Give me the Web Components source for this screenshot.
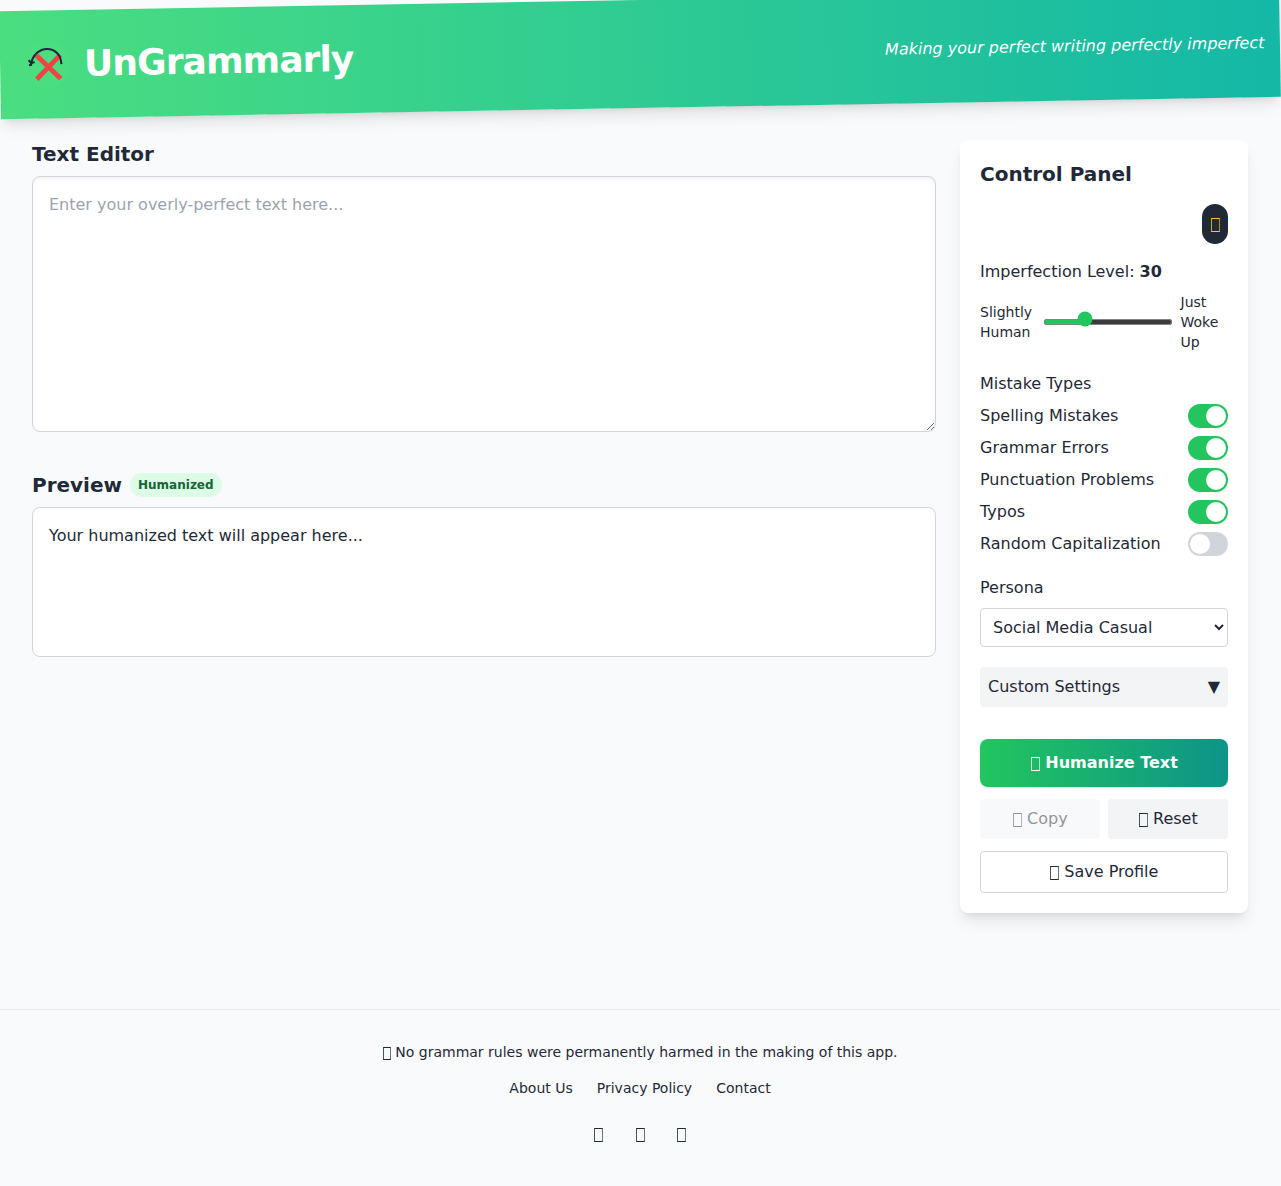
<!DOCTYPE html>
<html lang="en">
<head>
<meta charset="UTF-8">
<title>UnGrammarly</title>
<style>
  body {
    margin: 0;
    overflow-x: hidden;
    background: #f9fafb;
    color: #1f2937;
    font-family: "DejaVu Sans", sans-serif;
    font-size: 16px;
    line-height: 1.5;
  }
</style>
</head>
<body>
<ungrammarly-app></ungrammarly-app>

<script>
// shared by every component, each shadow root needs its own copy
const RESET = `
  *, ::before, ::after { box-sizing: border-box; }
  h1, h2, p { margin: 0; }
  button, select, textarea, input { font: inherit; color: inherit; margin: 0; }
  button { border: 0; background: none; }
`;

function define(name, html) {
  customElements.define(name, class extends HTMLElement {
    constructor() {
      super();
      this.attachShadow({ mode: "open" });
      this.shadowRoot.innerHTML = `<style>${RESET}</style>${html}`;
    }
  });
}

define("ug-logo", `
  <style>
    :host { display: block; width: 60px; height: 60px; }
    svg { display: block; }
  </style>
  <svg width="60" height="60" viewBox="0 0 100 100" fill="none">
    <circle cx="50" cy="50" r="40" fill="#4ade80" />
    <path d="M34 34.5 L74 74.5 M74 34.5 L34 74.5" stroke="#ef4444" stroke-width="8" />
    <path d="M25 50 C30 16 75 16 75.5 50" stroke="#1f2937" stroke-width="3.5" />
    <path d="M21 42.5 L25 47 L31 46 M21.5 51 L26.5 50" stroke="#1f2937" stroke-width="3.5" />
  </svg>
`);

// outlined box, one glyph wide
define("ug-glyph", `
  <style>
    :host { display: inline-block; width: 0.6em; height: 0.875em; padding-left: 0.6px; box-sizing: border-box; vertical-align: -0.19em; }
    i { display: block; height: 100%; border: 1px solid currentColor; border-left-color: color-mix(in srgb, currentColor 80%, transparent); border-right-color: color-mix(in srgb, currentColor 65%, transparent); }
  </style>
  <i></i>
`);

define("ug-header", `
  <style>
    :host {
      display: flex;
      align-items: center;
      justify-content: space-between;
      height: 108px;
      box-sizing: border-box;
      padding: 24px 15.5px 24px 16px;
      background: linear-gradient(to right, #4ade80, #14b8a6);
      box-shadow: 0 10px 15px -3px rgba(0,0,0,0.1), 0 4px 6px -4px rgba(0,0,0,0.1);
      color: #fff;
      transform: rotate(-1deg);
    }
    .brand { display: flex; align-items: center; gap: 8px; }
    h1 { font-size: 36px; line-height: 40px; letter-spacing: -0.9px; font-weight: 700; }
    p { font-style: italic; }
  </style>
  <div class="brand">
    <ug-logo></ug-logo>
    <h1>UnGrammarly</h1>
  </div>
  <p><slot></slot></p>
`);

define("ug-editor", `
  <style>
    :host { display: block; }
    h2 { font-size: 20px; line-height: 28px; margin-bottom: 8px; }
    textarea {
      display: block;
      width: 100%;
      height: 256px;
      padding: 16px;
      border: 1px solid #d1d5db;
      border-radius: 8px;
      background: #fff;
      box-shadow: inset 0 2px 4px 0 rgba(0,0,0,0.05);
      resize: vertical;
    }
    textarea::placeholder { color: #9ca3af; }
  </style>
  <h2>Text Editor</h2>
  <textarea placeholder="Enter your overly-perfect text here..."></textarea>
`);

define("ug-preview", `
  <style>
    :host { display: block; }
    .head { display: flex; align-items: center; gap: 8px; margin-bottom: 8px; }
    h2 { font-size: 20px; line-height: 28px; }
    .badge {
      padding: 4px 8px;
      border-radius: 999px;
      background: #dcfce7;
      color: #166534;
      font-size: 12px;
      line-height: 16px;
      font-weight: 600;
    }
    .output {
      min-height: 150px;
      padding: 16px;
      border: 1px solid #d1d5db;
      border-radius: 8px;
      background: #fff;
    }
  </style>
  <div class="head"><h2>Preview</h2><span class="badge">Humanized</span></div>
  <div class="output"><slot></slot></div>
`);

define("ug-level", `
  <style>
    :host { display: block; }
    .row { display: flex; align-items: center; gap: 8px; margin-top: 8px; font-size: 14px; line-height: 20px; }
    .low { width: 55px; flex: none; }
    .high { width: 47.5px; flex: none; }
    input { flex: 1; min-width: 0; height: 6px; accent-color: #22c55e; }
    input::-webkit-slider-thumb {
      -webkit-appearance: none;
      width: 15px;
      height: 15px;
      border-radius: 50%;
      background: #22c55e;
      margin-top: -6px;
    }
  </style>
  <div>Imperfection Level: <b>30</b></div>
  <div class="row">
    <span class="low">Slightly Human</span>
    <input type="range" min="0" max="100" value="30">
    <span class="high">Just Woke Up</span>
  </div>
`);

define("ug-toggle", `
  <style>
    :host { display: flex; align-items: center; justify-content: space-between; height: 24px; }
    .track { width: 40px; height: 24px; padding: 2px; border-radius: 12px; background: #d1d5db; display: flex; }
    .track::before { content: ""; width: 20px; height: 20px; border-radius: 50%; background: #fff; }
    :host([checked]) .track { background: #22c55e; justify-content: flex-end; }
  </style>
  <span><slot></slot></span>
  <span class="track"></span>
`);

define("ug-button", `
  <style>
    :host { display: block; }
    button { display: block; width: 100%; padding: 8px; border-radius: 4px; background: #f3f4f6; text-align: center; }
    :host([kind="primary"]) button {
      padding: 12px;
      border-radius: 8px;
      background: linear-gradient(to right, #22c55e, #0d9488);
      box-shadow: 0 1px 3px 0 rgba(0,0,0,0.1), 0 1px 2px -1px rgba(0,0,0,0.1);
      color: #fff;
      font-weight: 700;
    }
    :host([kind="outline"]) button { background: #fff; border: 1px solid #d1d5db; }
    :host([disabled]) button { opacity: 0.5; }
  </style>
  <button><slot></slot></button>
`);

define("ug-panel", `
  <style>
    :host {
      display: block;
      padding: 20px;
      border-radius: 8px;
      background: #fff;
      box-shadow: 0 10px 15px -3px rgba(0,0,0,0.1), 0 4px 6px -4px rgba(0,0,0,0.1);
    }
    h2 { font-size: 20px; line-height: 28px; margin-bottom: 16px; }
    .theme { display: flex; justify-content: flex-end; margin-bottom: 16px; }
    .theme button { height: 40px; padding: 8px; border-radius: 999px; background: #1f2937; color: #facc15; line-height: 24px; }
    ug-level { margin-bottom: 20px; }
    .types { display: grid; gap: 8px; margin-bottom: 20px; }
    label { display: block; margin-bottom: 8px; }
    select {
      display: block;
      width: 100%;
      height: 39px;
      padding: 8px;
      border: 1px solid #d1d5db;
      border-radius: 4px;
      background: #fff;
      margin-bottom: 20px;
    }
    .custom {
      display: flex;
      justify-content: space-between;
      width: 100%;
      padding: 8px;
      border-radius: 4px;
      background: #f3f4f6;
      margin-bottom: 32px;
    }
    .actions { display: grid; grid-template-columns: 1fr 1fr; gap: 12px 8px; }
    .wide { grid-column: span 2; }
  </style>
  <h2>Control Panel</h2>
  <div class="theme"><button><ug-glyph></ug-glyph></button></div>
  <ug-level></ug-level>
  <div class="types">
    <span>Mistake Types</span>
    <ug-toggle checked>Spelling Mistakes</ug-toggle>
    <ug-toggle checked>Grammar Errors</ug-toggle>
    <ug-toggle checked>Punctuation Problems</ug-toggle>
    <ug-toggle checked>Typos</ug-toggle>
    <ug-toggle>Random Capitalization</ug-toggle>
  </div>
  <label for="persona">Persona</label>
  <select id="persona"><option>Social Media Casual</option></select>
  <button class="custom"><span>Custom Settings</span><span>▼</span></button>
  <div class="actions">
    <ug-button class="wide" kind="primary"><ug-glyph></ug-glyph> Humanize Text</ug-button>
    <ug-button disabled><ug-glyph></ug-glyph> Copy</ug-button>
    <ug-button><ug-glyph></ug-glyph> Reset</ug-button>
    <ug-button class="wide" kind="outline"><ug-glyph></ug-glyph> Save Profile</ug-button>
  </div>
`);

define("ug-footer", `
  <style>
    :host {
      display: flex;
      flex-direction: column;
      align-items: center;
      gap: 16px;
      padding: 32px 16px;
      border-top: 1px solid #e5e7eb;
      font-size: 14px;
      line-height: 20px;
    }
    nav { display: flex; gap: 24px; }
    .social { display: flex; gap: 32px; margin-top: 8px; font-size: 16px; line-height: 24px; }
  </style>
  <p><ug-glyph></ug-glyph> No grammar rules were permanently harmed in the making of this app.</p>
  <nav><span>About Us</span><span>Privacy Policy</span><span>Contact</span></nav>
  <div class="social">
    <span><ug-glyph></ug-glyph></span>
    <span><ug-glyph></ug-glyph></span>
    <span><ug-glyph></ug-glyph></span>
  </div>
`);

define("ungrammarly-app", `
  <style>
    :host { display: block; width: 1280px; }
    main {
      display: grid;
      grid-template-columns: 1fr 288px;
      gap: 24px;
      align-items: start;
      padding: 32px 32px 96px;
    }
    .work { display: grid; gap: 39px; }
  </style>
  <ug-header>Making your perfect writing perfectly imperfect</ug-header>
  <main>
    <div class="work">
      <ug-editor></ug-editor>
      <ug-preview>Your humanized text will appear here...</ug-preview>
    </div>
    <ug-panel></ug-panel>
  </main>
  <ug-footer></ug-footer>
`);
</script>
</body>
</html>
